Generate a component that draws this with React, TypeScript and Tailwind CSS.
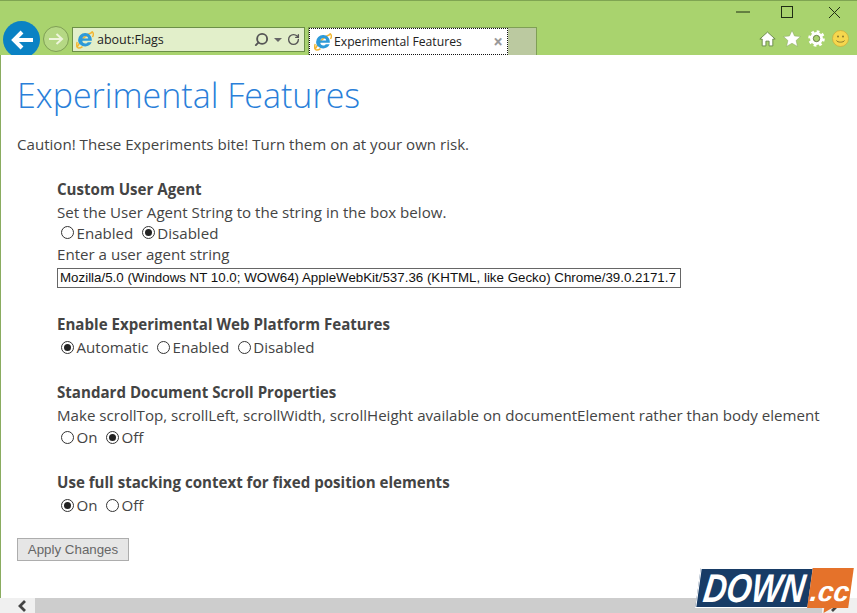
import { RotateCw, Search } from 'lucide-react'

const SANS = 'font-["Open_Sans","Noto_Sans",sans-serif]'

function IeLogo({ size }: { size: number }) {
  return (
    <svg width={size} height={size} viewBox="1 1.500 18 18" className="shrink-0">
      <path d="M2 17.500C5 12 11 5 18 2.500" fill="none" stroke="#f2b632" strokeWidth="1.600" />
      <path d="M16.500 2.200c2.500.4 2.200 3.300 1 5.300M2.200 12.500c-1 3-.8 6 1.300 6 1.500 0 3-.6 4-1.400" fill="none" stroke="#f2b632" strokeWidth="1.400" />
      <path d="M10.400 3.500a6.900 6.900 0 0 0-7.300 7c0 3.700 3.200 6.400 7.200 6.400 2.900 0 5.300-1.500 6.300-4.100h-3.800c-.6.900-1.400 1.300-2.500 1.300-1.600 0-2.900-1.100-3-2.800h9.500v-1c0-3.900-2.900-6.800-6.400-6.800zM7.400 9c.2-1.500 1.500-2.600 3-2.600S13.100 7.500 13.200 9z" fill="#2d9ad8" fillRule="evenodd" />
    </svg>
  )
}

function Radio({ label, checked }: { label: string; checked?: boolean }) {
  return (
    <span className="flex items-center">
      <span className="flex h-[13px] w-[13px] items-center justify-center rounded-full border border-[#333] bg-white">
        {checked && <span className="h-[7px] w-[7px] rounded-full bg-[#222]" />}
      </span>
      <span className="ml-[2.500px]">{label}</span>
    </span>
  )
}

function Radios({ items, checked, short }: { items: string[]; checked: string; short?: boolean }) {
  return (
    <div className={`flex items-center gap-[8.500px] pl-[4px] ${short ? 'h-[21px] pb-[2px]' : 'h-[22px]'}`}>
      {items.map(item => (
        <Radio key={item} label={item} checked={item === checked} />
      ))}
    </div>
  )
}

function Heading({ children }: { children: string }) {
  return <h2 className="h-[23px] text-[15.100px] leading-[23px] font-bold text-[#444]">{children}</h2>
}

export default function App() {
  return (
    <div className={`relative flex h-[613px] w-[857px] flex-col overflow-hidden bg-white ${SANS}`}>
      {/* browser chrome */}
      <header className="relative h-[55px] shrink-0 border-t border-[#7fa552] bg-[#a9d36e]">
        <div className="absolute top-[20px] left-[3px] flex h-[34px] w-[37px] items-start justify-center overflow-hidden">
          <div className="flex h-[37px] w-[37px] shrink-0 items-center justify-center rounded-full bg-[#0a82c4]">
            <svg width="24" height="22" viewBox="0 0 24 22" fill="none" stroke="white" strokeWidth="4">
              <path d="M12 3 4 11l8 8M4 11h19" />
            </svg>
          </div>
        </div>
        <div className="absolute top-[25px] left-[43px] flex h-[26px] w-[26px] items-center justify-center rounded-full border border-[#7f9f55] bg-[#b5d884]">
          <svg width="16" height="14" viewBox="0 0 16 14" fill="none" stroke="#eef5dc" strokeWidth="2">
            <path d="M8.500 2 14 7l-5.500 5M14 7H1" />
          </svg>
        </div>
        <div className="absolute top-[26px] left-[72px] flex h-[25px] w-[233px] items-center border border-[#6c8f48] bg-[#e2efca] pl-[3px]">
          <IeLogo size={18} />
          <span className="ml-[3px] pt-[2px] text-[12.500px] text-[#222]">about:Flags</span>
          <Search size={15} strokeWidth={3} className="ml-auto -scale-x-100 text-[#555]" />
          <span className="mx-[5px] h-0 w-0 border-x-[4px] border-t-[4px] border-x-transparent border-t-[#666]" />
          <RotateCw size={13} strokeWidth={2.500} className="mr-[4px] text-[#555]" />
        </div>
        <div className="absolute top-[26px] left-[308px] flex h-[28px] w-[229px] border border-b-0 border-[#7f9f55]">
          <div className="flex w-[199px] items-center border border-dotted border-[#111] bg-white pl-[4px]">
            <IeLogo size={18} />
            <span className="ml-[2px] pt-[2px] text-[12.200px] text-[#222]">Experimental Features</span>
            <span className="mr-[4px] ml-auto text-[17px] leading-none font-bold text-[#999]">×</span>
          </div>
          <div className="flex-1 bg-[#bbc9a0]" />
        </div>
        <svg width="14" height="12" viewBox="0 0 14 12" className="absolute top-[5px] right-[107px]">
          <path d="M0 6h14" stroke="#1f2d14" strokeWidth="1" />
        </svg>
        <svg width="12" height="12" viewBox="0 0 12 12" className="absolute top-[5px] right-[64px]">
          <rect x=".5" y=".5" width="11" height="11" fill="none" stroke="#1f2d14" />
        </svg>
        <svg width="13" height="13" viewBox="0 0 13 13" className="absolute top-[5px] right-[16px]">
          <path d="m1 1 11 11M12 1 1 12" stroke="#1f2d14" />
        </svg>
        <div className="absolute top-[29px] right-[8px] flex items-center gap-[7px]">
          <svg width="17" height="16" viewBox="0 0 16 15">
            <path d="M8 1 .8 7.500H3V14h3.500V9.500h3V14H13V7.500h2.200z" fill="white" stroke="#5f7f40" strokeWidth=".8" />
          </svg>
          <svg width="18" height="17" viewBox="0 0 17 16">
            <path d="m8.500.4 2.400 5.200 5.700.5-4.200 3.800 1.300 5.600-5.200-3-5.200 3 1.300-5.600L.4 6.100l5.700-.5z" fill="white" stroke="#8aa865" strokeWidth=".5" />
          </svg>
          <svg width="17" height="17" viewBox="0 0 16 16">
            <circle cx="8" cy="8" r="4.600" fill="none" stroke="white" strokeWidth="3" />
            <circle cx="8" cy="8" r="6.600" fill="none" stroke="white" strokeWidth="2.400" strokeDasharray="2.600 2.580" />
            <circle cx="8" cy="8" r="3" fill="none" stroke="#5f7040" strokeWidth=".8" />
          </svg>
          <svg width="17" height="17" viewBox="0 0 17 17">
            <circle cx="8.500" cy="8.500" r="8" fill="#f5d74e" stroke="#c9a93a" strokeWidth=".7" />
            <circle cx="6" cy="6.500" r="1" fill="#8a7a2c" />
            <circle cx="11" cy="6.500" r="1" fill="#8a7a2c" />
            <path d="M4.500 10.500c1 2.200 7 2.200 8 0" fill="none" stroke="#8a7a2c" />
          </svg>
        </div>
      </header>

      {/* page content */}
      <main className="min-h-0 flex-1 border-l border-[#8aac60] pl-[16px] text-[15.100px] leading-[22px] text-[#444]">
        <h1 className="mt-[15px] h-[50px] text-[34px] leading-[50px] font-light text-[#2a7fd9]">Experimental Features</h1>
        <p className="mt-[13px] h-[22px]">Caution! These Experiments bite! Turn them on at your own risk.</p>

        <div className="mt-[23px] pl-[40px]">
          <Heading>Custom User Agent</Heading>
          <p>Set the User Agent String to the string in the box below.</p>
          <Radios items={['Enabled', 'Disabled']} checked="Disabled" short />
          <p className="h-[21px] leading-[21px]">Enter a user agent string</p>
          <input
            readOnly
            value="Mozilla/5.0 (Windows NT 10.0; WOW64) AppleWebKit/537.36 (KHTML, like Gecko) Chrome/39.0.2171.7"
            className="mt-[3px] block h-[20px] w-[624px] border border-[#666] px-[2px] font-['Liberation_Sans',sans-serif] text-[13.330px] text-[#111]"
          />

          <div className="mt-[25px]">
            <Heading>Enable Experimental Web Platform Features</Heading>
            <Radios items={['Automatic', 'Enabled', 'Disabled']} checked="Automatic" />
          </div>

          <div className="mt-[23px]">
            <Heading>Standard Document Scroll Properties</Heading>
            <p>Make scrollTop, scrollLeft, scrollWidth, scrollHeight available on documentElement rather than body element</p>
            <Radios items={['On', 'Off']} checked="Off" />
          </div>

          <div className="mt-[23px]">
            <Heading>Use full stacking context for fixed position elements</Heading>
            <Radios items={['On', 'Off']} checked="On" />
          </div>
        </div>

        <button className="mt-[22px] block h-[23px] w-[112px] border border-[#adadad] bg-[#e6e6e6] font-['Liberation_Sans',sans-serif] text-[13.330px] text-[#666]">
          Apply Changes
        </button>
      </main>

      {/* horizontal scrollbar */}
      <div className="flex h-[15px] shrink-0 items-center justify-between bg-[#cdcdcd]">
        <div className="flex h-full w-[35px] items-center justify-end bg-[#f0f0f0] pr-[8px]">
          <svg width="10" height="12" viewBox="0 0 10 12" fill="none" stroke="#444" strokeWidth="2.800">
            <path d="M8 1 3 6l5 5" />
          </svg>
        </div>
        <div className="flex h-full w-[35px] items-center bg-[#f0f0f0] pl-[8px]">
          <svg width="10" height="12" viewBox="0 0 10 12" fill="none" stroke="#444" strokeWidth="2.800">
            <path d="m2 1 5 5-5 5" />
          </svg>
        </div>
      </div>

      {/* watermark */}
      <div className="absolute right-[6px] bottom-[5px] h-[40px] w-[153px] -skew-x-[8deg] font-['Liberation_Sans',sans-serif] font-bold italic">
        <div className="flex h-full">
          <span className="flex w-[112px] items-center justify-center border border-r-0 border-white bg-[#183c66] text-[32px] text-white">
            <span className="scale-y-[1.250]">DOWN</span>
          </span>
          <span className="flex w-[41px] items-end justify-center bg-[#e5722a] pb-[2px] text-[28px] leading-[28px] text-white">.cc</span>
        </div>
        <span className="absolute right-[16px] -bottom-[5px] h-0 w-0 border-t-[5px] border-r-[8px] border-t-[#e5722a] border-r-transparent" />
      </div>
    </div>
  )
}
